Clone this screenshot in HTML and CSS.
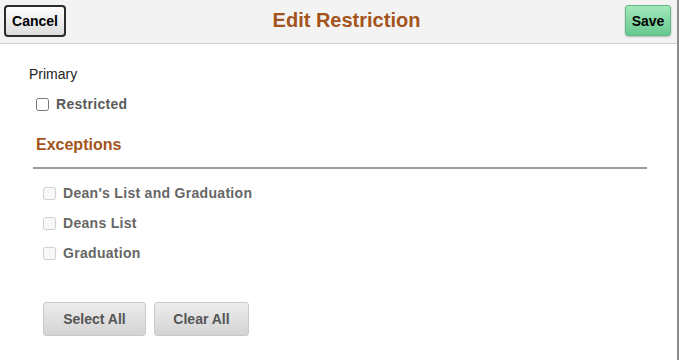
FILE: index.html
```html
<!DOCTYPE html>
<html lang="en">
<head>
    <meta charset="UTF-8">
    <title>Edit Restriction</title>
    <link rel="stylesheet" href="styles.css">
</head>
<body>
    <div class="page">
        <header class="topbar">
            <button class="btn-cancel">Cancel</button>
            <h1>Edit Restriction</h1>
            <button class="btn-save">Save</button>
        </header>
        <main class="content">
            <p class="field-label">Primary</p>
            <label class="check"><input type="checkbox"> Restricted</label>

            <h2 class="section-title">Exceptions</h2>
            <hr class="divider">

            <div class="exceptions">
                <label class="check disabled"><input type="checkbox" disabled> Dean's List and Graduation</label>
                <label class="check disabled"><input type="checkbox" disabled> Deans List</label>
                <label class="check disabled"><input type="checkbox" disabled> Graduation</label>
            </div>

            <div class="actions">
                <button class="btn-grey select-all">Select All</button>
                <button class="btn-grey clear-all">Clear All</button>
            </div>
        </main>
    </div>
</body>
</html>
```

FILE: styles.css
```css
* { margin: 0; padding: 0; box-sizing: border-box; }
body {
    font-family: 'Liberation Sans', Arial, sans-serif;
    background: #fff;
    width: 679px;
    height: 360px;
    overflow: hidden;
}
.page {
    height: 360px;
    width: 679px;
    border-right: 2px solid #8c8c8c;
}
.topbar {
    display: flex;
    justify-content: space-between;
    align-items: center;
    height: 44px;
    padding: 0 6px 2px 4px;
    background-color: #f3f3f3;
    border-bottom: 1px solid #cfcfcf;
}
.topbar h1 {
    font-size: 20px;
    font-weight: bold;
    color: #a3541c;
    margin-left: 2px;
}
.btn-cancel {
    width: 62px;
    height: 32px;
    font-family: inherit;
    font-size: 14px;
    font-weight: bold;
    color: #000;
    border: 2px solid #2b2b2b;
    border-radius: 4px;
    background: linear-gradient(#fdfdfd, #dcdcdc);
}
.btn-save {
    width: 46px;
    height: 31px;
    font-family: inherit;
    font-size: 14px;
    font-weight: bold;
    color: #000;
    border: 1px solid #5fb983;
    border-radius: 3px;
    background: linear-gradient(#a3e6bc, #67c98f);
    box-shadow: 0 1px 2px rgba(0, 0, 0, 0.25);
}
.content {
    padding: 22px 29px 0 29px;
}
.field-label {
    font-size: 14px;
    color: #222;
    line-height: 16px;
}
.check {
    display: flex;
    align-items: center;
    font-size: 14px;
    font-weight: bold;
    letter-spacing: 0.3px;
    color: #5a5a5a;
    line-height: 16px;
}
.check input {
    width: 13px;
    height: 13px;
    margin: 0 7px 0 0;
}
.content > .check {
    margin: 14px 0 0 7px;
}
.section-title {
    font-size: 16px;
    font-weight: bold;
    color: #a3541c;
    margin: 24px 0 0 7px;
    line-height: 18px;
}
.divider {
    border: none;
    border-top: 2px solid #9c9c9c;
    margin: 13px 1px 0 4px;
}
.exceptions {
    display: flex;
    flex-direction: column;
    gap: 14px;
    margin: 16px 0 0 14px;
}
.check.disabled {
    color: #666;
}
.actions {
    display: flex;
    gap: 8px;
    margin: 41px 0 0 14px;
}
.btn-grey {
    height: 34px;
    font-family: inherit;
    font-size: 14px;
    font-weight: bold;
    color: #555;
    border: 1px solid #c9c9c9;
    border-radius: 3px;
    background: linear-gradient(#ececec, #d4d4d4);
}
.select-all { width: 103px; }
.clear-all { width: 95px; }
```
